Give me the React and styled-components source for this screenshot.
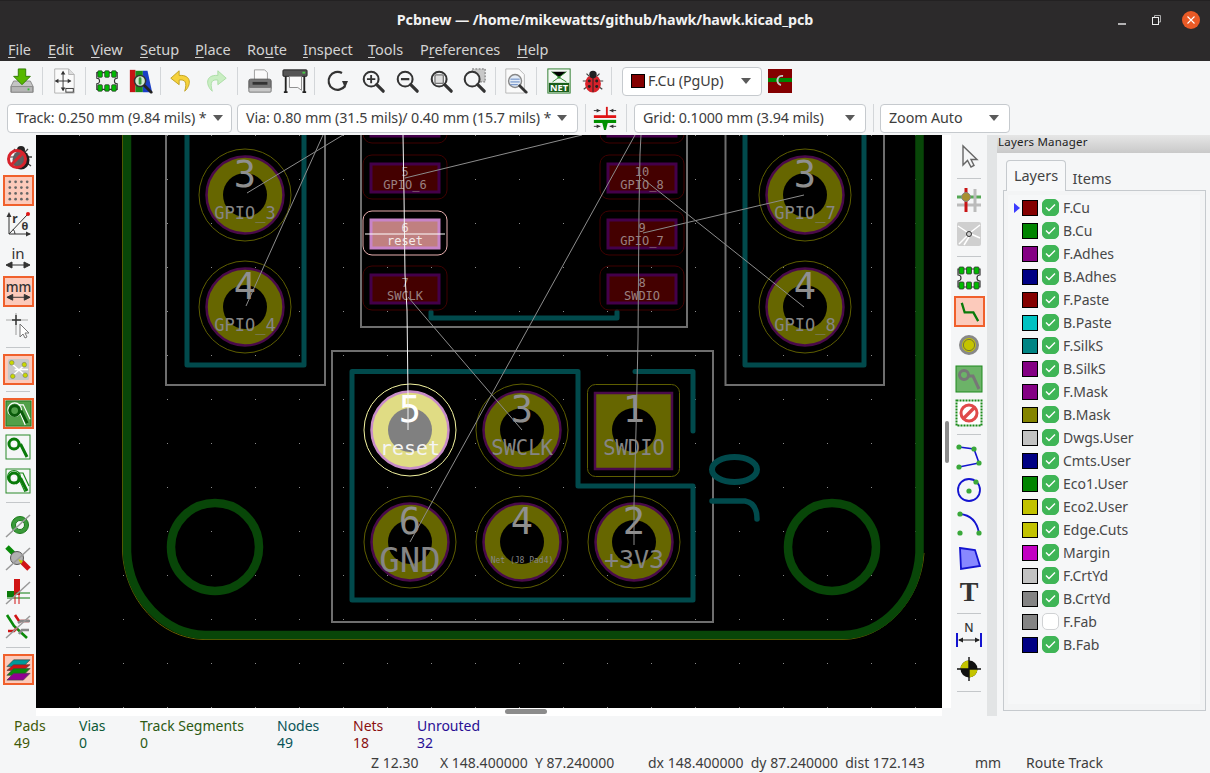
import React from 'react'
import styled, { createGlobalStyle } from 'styled-components'

const UI_FONT = `"Noto Sans", "Open Sans", sans-serif`
const MONO = `"DejaVu Sans Mono", monospace`

const GlobalStyle = createGlobalStyle`
  html, body { margin: 0; padding: 0; background: #f5f6f7; }
  body { font-family: ${UI_FONT}; overflow: hidden; }
`

const Window = styled.div`
  width: 1210px;
  height: 773px;
  display: flex;
  flex-direction: column;
  overflow: hidden;
  background: #f5f6f7;
`

const TitleBar = styled.div`
  height: 38px;
  display: grid;
  grid-template-columns: 1fr auto 1fr;
  align-items: center;
  background: #2c2a2b;
  border-top: 1px solid #232122;
  box-sizing: border-box;
  flex: none;
`
const Title = styled.div`
  grid-column: 2;
  color: #f2f2f2;
  font-size: 14.3px;
  font-weight: 700;
  letter-spacing: -0.1px;
`
const WindowButtons = styled.div`
  grid-column: 3;
  justify-self: end;
  display: flex;
  align-items: center;
  padding-right: 10px;
`
const WindowButton = styled.svg`
  width: ${p => p.$w}px;
  height: 20px;
  display: block;
`

const MenuBar = styled.div`
  height: 23px;
  box-sizing: border-box;
  display: flex;
  align-items: center;
  padding-left: 8px;
  padding-bottom: 2px;
  background: #2c2a2b;
  flex: none;
`
const MenuItem = styled.span`
  width: ${p => p.$w}px;
  color: #d3d3d3;
  font-size: 14.5px;
  letter-spacing: -0.05px;
  white-space: nowrap;
  u { text-underline-offset: 2px; }
`

const Toolbar = styled.div`
  height: ${p => p.$h}px;
  display: flex;
  align-items: center;
  padding-left: ${p => p.$pad}px;
  background: #f5f6f7;
  flex: none;
`
const ToolSlot = styled.div`
  width: ${p => p.$w}px;
  height: 30px;
  display: flex;
  align-items: center;
  justify-content: center;
  flex: none;
`
const ToolSep = styled.div`
  width: ${p => p.$w || 7}px;
  height: 28px;
  flex: none;
  display: flex;
  justify-content: center;
  &::before { content: ''; width: 1px; background: #d3d6d9; }
`
const Combo = styled.div`
  width: ${p => p.$w}px;
  height: 29px;
  box-sizing: border-box;
  margin-left: ${p => p.$ml || 0}px;
  padding: 0 10px 1px 8px;
  display: flex;
  align-items: center;
  justify-content: space-between;
  background: #fff;
  border: 1px solid #c6cace;
  border-radius: 4px;
  color: #3d3d3d;
  font-size: 14.3px;
  letter-spacing: -0.1px;
  white-space: nowrap;
  flex: none;
  &::after {
    content: '';
    border-left: 5px solid transparent;
    border-right: 5px solid transparent;
    border-top: 6px solid #5a5a5a;
    margin-left: 6px;
  }
`
const ComboLabel = styled.span`
  display: flex;
  align-items: center;
  gap: 3px;
`
const LayerSwatchSmall = styled.span`
  width: 12px;
  height: 12px;
  background: #840000;
  border: 1px solid #000;
`
const ActiveLayerBadge = styled.svg`
  width: 24px;
  height: 24px;
  margin-left: 6px;
  flex: none;
`

const Main = styled.div`
  height: 581px;
  display: flex;
  flex: none;
`
const SideBar = styled.div`
  width: ${p => p.$w}px;
  flex: none;
  display: flex;
  flex-direction: column;
  align-items: center;
  padding-top: ${p => p.$top}px;
  box-sizing: border-box;
  background: #f5f6f7;
`
const SideSlot = styled.div`
  width: 31px;
  height: 33.7px;
  flex: none;
  display: flex;
  align-items: center;
  justify-content: center;
  svg {
    display: block;
    width: 28px;
    height: 28px;
    overflow: visible;
    ${p => p.$active && `
      width: 31px;
      height: 31px;
      box-sizing: border-box;
      background: #fccabb;
      border: 2px solid #f0602c;
    `}
  }
`
const SideSep = styled.div`
  width: 24px;
  height: 10.3px;
  flex: none;
  display: flex;
  align-items: center;
  &::before { content: ''; width: 100%; height: 1px; background: #c4c7ca; }
`

const CanvasColumn = styled.div`
  width: 915px;
  flex: none;
  display: flex;
  flex-direction: column;
  background: #f5f6f7;
`
const CanvasRow = styled.div`
  height: 573px;
  display: flex;
  background: #fff;
`
const Board = styled.svg`
  width: 906px;
  height: 573px;
  display: block;
  background: #000;
  flex: none;
`
const VScroll = styled.div`
  width: 9px;
  padding-top: 286px;
  box-sizing: border-box;
  display: flex;
  justify-content: center;
  &::before { content: ''; width: 4px; height: 42px; border-radius: 2px; background: #8c8c8c; }
`
const HScroll = styled.div`
  width: 906px;
  height: 8px;
  padding-left: 469px;
  padding-top: 1px;
  box-sizing: border-box;
  background: #fff;
  &::before { content: ''; display: block; width: 42px; height: 5px; border-radius: 3px; background: #8c8c8c; }
`
const Splitter = styled.div`
  width: 10px;
  flex: none;
  background: #e2e4e5;
`

const LayersPanel = styled.div`
  flex: 1;
  display: flex;
  flex-direction: column;
`
const PanelTitle = styled.div`
  height: 18px;
  padding-left: 1px;
  font-size: 11.5px;
  line-height: 13px;
  color: #222;
  letter-spacing: 0.2px;
  background: linear-gradient(#e6e6e6, #c9c9c9);
  flex: none;
`
const Tabs = styled.div`
  height: 37px;
  display: flex;
  align-items: flex-end;
  padding-left: 9px;
  flex: none;
`
const Tab = styled.div`
  height: ${p => (p.$active ? 31 : 27)}px;
  width: ${p => (p.$active ? 60 : 52)}px;
  box-sizing: border-box;
  display: flex;
  align-items: center;
  justify-content: center;
  font-size: 14.5px;
  color: #444;
  padding-top: ${p => (p.$active ? 0 : 2)}px;
  padding-bottom: ${p => (p.$active ? 2 : 0)}px;
  ${p => p.$active && `
    background: #f7f8f9;
    border: 1px solid #c6cace;
    border-bottom: none;
    border-radius: 4px 4px 0 0;
    margin-bottom: -1px;
    position: relative;
  `}
`
const TabBody = styled.div`
  width: 203px;
  height: 521px;
  margin-left: 6px;
  padding: 4px 5px 6px 4px;
  box-sizing: border-box;
  background: #f3f4f5;
  border: 1px solid #c6cace;
  flex: none;
`
const LayerList = styled.div`
  height: 100%;
  padding-top: 1px;
  box-sizing: border-box;
  background: #f6f7f8;
`
const LayerRow = styled.div`
  height: 23px;
  display: flex;
  align-items: center;
  padding-left: 6px;
`
const ActiveMark = styled.span`
  width: 0;
  height: 0;
  flex: none;
  border-left: 6px solid ${p => (p.$on ? '#3c3cff' : 'transparent')};
  border-top: 5px solid transparent;
  border-bottom: 5px solid transparent;
  margin-right: 2px;
`
const LayerSwatch = styled.span`
  width: 16px;
  height: 16px;
  box-sizing: border-box;
  background: ${p => p.$color};
  border: 1px solid #000;
  flex: none;
`
const LayerCheck = styled.span`
  width: 17px;
  height: 17px;
  margin-left: 4px;
  box-sizing: border-box;
  border-radius: 5px;
  display: flex;
  align-items: center;
  justify-content: center;
  flex: none;
  background: ${p => (p.$checked ? '#3fb556' : '#fff')};
  border: 1px solid ${p => (p.$checked ? '#3fb556' : '#d0d2d4')};
`
const LayerName = styled.span`
  margin-left: 4px;
  font-size: 14px;
  color: #484848;
`

const StatusBar = styled.div`
  height: 57px;
  display: flex;
  flex-direction: column;
  flex: none;
  background: #f5f6f7;
  color: #3d3d3d;
  font-size: 14px;
`
const StatRow = styled.div`
  display: flex;
  padding-left: 14px;
  padding-top: ${p => p.$top}px;
`
const StatCol = styled.div`
  width: ${p => p.$w}px;
  line-height: 17px;
  flex: none;
  white-space: nowrap;
  color: ${p => p.$color};
`
const StatusLine = styled.div`
  display: flex;
  padding-left: 371px;
  line-height: 18px;
  padding-top: 3px;
`
const StatusCell = styled.span`
  width: ${p => p.$w}px;
  flex: none;
  white-space: pre;
`

const PadNumber = styled.text`
  font-family: ${MONO};
  text-anchor: middle;
  fill: ${p => p.$fill};
`

/* toolbar icon drawing */
const TOP = 26
const Ico = ({ s = 28, children }) => (
  <svg width={s} height={s} viewBox="0 0 28 28">{children}</svg>
)
const Mag = ({ children, stroke = '#333' }) => (
  <>
    <circle cx="12" cy="12" r="8" fill="#f5f6f7" stroke={stroke} strokeWidth="2.2" />
    <path d="M18 18l7 7" stroke={stroke} strokeWidth="3.4" strokeLinecap="round" />
    {children}
  </>
)
const Tiny = ({ x, y, size = 14, fill = '#333', weight = 400, family = UI_FONT, children }) => (
  <text x={x} y={y} fontSize={size} fill={fill} fontWeight={weight} fontFamily={family} textAnchor="middle">{children}</text>
)
const DoubleArrow = ({ y = 21 }) => (
  <g stroke="#333" strokeWidth="1" fill="#333">
    <path d={`M3 ${y}H25`} />
    <path d={`M2 ${y}l6-3v6z M26 ${y}l-6-3v6z`} />
  </g>
)
const ChipPads = () => (
  <>
    <path d="M3 5H25V11a3 3 0 0 0 0 6V23H3V17a3 3 0 0 0 0-6Z" fill="#eee" stroke="#333" strokeWidth="1.2" />
    {[4, 11.5, 19].map(x => (
      <g key={x} fill="#0b0" stroke="#333" strokeWidth="0.8">
        <rect x={x} y="3" width="5" height="7" rx="1" />
        <rect x={x} y="18" width="5" height="7" rx="1" />
      </g>
    ))}
  </>
)
const Diag = () => <path d="M2 26L26 4" stroke="#999" strokeWidth="1.5" />

const IconSave = () => (
  <Ico s={TOP}>
    <path d="M5 14H23L26 20V26H2V20Z" fill="#c4c4c4" stroke="#8a8a8a" />
    <rect x="2.5" y="20" width="23" height="6" fill="#b5b5b5" stroke="#8a8a8a" />
    <rect x="20" y="22" width="2" height="2" fill="#3b3" />
    <path d="M10 1H18V9H23L14 18L5 9H10Z" fill="#58b800" stroke="#2f7a00" />
  </Ico>
)
const IconPage = () => (
  <Ico s={TOP}>
    <path d="M4 1H19L25 7V27H4Z" fill="#fafafa" stroke="#b0b0b0" />
    <path d="M19 1V7H25" fill="#ddd" stroke="#b0b0b0" />
    <path d="M13 4V24M5 14H21" stroke="#333" />
    <path d="M13 3l-2.5 4h5zM13 25l-2.5-4h5zM4 14l4-2.5v5zM22 14l-4-2.5v5z" fill="#333" />
    <rect x="16" y="22" width="8" height="4" fill="none" stroke="#333" />
  </Ico>
)
const IconFootprint = () => <Ico s={TOP}><ChipPads /></Ico>
const IconInspector = () => (
  <Ico s={TOP}>
    <rect x="2" y="2" width="6" height="24" fill="#c71414" />
    <rect x="8" y="3" width="8" height="23" fill="#1a8a1a" />
    <path d="M16 3H21L26 26H16Z" fill="#1a3ec7" />
    <circle cx="13" cy="14" r="6" fill="#cfe8cf" stroke="#333" strokeWidth="1.6" />
    <rect x="11.5" y="10" width="3" height="8" rx="1.5" fill="#3a9a3a" />
    <path d="M18 19l7 7" stroke="#222" strokeWidth="3" strokeLinecap="round" />
  </Ico>
)
const Arrow = ({ fill, stroke, flip }) => (
  <Ico s={TOP}>
    <path
      d="M12 3L3 11L12 18V13C18 12 21 15 18 25C25 19 26 7 12 8Z"
      fill={fill}
      stroke={stroke}
      transform={flip ? 'translate(28 0) scale(-1 1)' : undefined}
    />
  </Ico>
)
const IconUndo = () => <Arrow fill="#f6d23c" stroke="#bfa020" />
const IconRedo = () => <Arrow flip fill="#c9eec2" stroke="#aadca4" />
const IconPrint = () => (
  <Ico s={TOP}>
    <path d="M8 2H19L22 5V13H8Z" fill="#fafafa" stroke="#999" />
    <path d="M4 12H24a2 2 0 0 1 2 2V22H2V14a2 2 0 0 1 2-2Z" fill="#777" stroke="#555" />
    <rect x="2" y="21" width="24" height="5" rx="1" fill="#c8c8c8" stroke="#777" />
    <rect x="6" y="15" width="16" height="3" fill="#333" />
  </Ico>
)
const IconPlot = () => (
  <Ico s={TOP}>
    <rect x="1" y="2" width="26" height="7" rx="1" fill="#555" stroke="#222" />
    <rect x="22" y="4" width="3" height="2" fill="#4c4" />
    <path d="M8 9H21V24L17 21L8 21Z" fill="#fafafa" stroke="#888" />
    <path d="M4 9V26M24 9V26M2 26H6M22 26H26" stroke="#222" strokeWidth="2" />
  </Ico>
)
const IconRedraw = () => (
  <Ico>
    <path d="M21 19A9 9 0 1 1 18 6" fill="none" stroke="#333" strokeWidth="2.2" />
    <path d="M24 14H18L21 21Z" fill="#333" />
  </Ico>
)
const IconZoomIn = () => <Ico s={TOP}><Mag><path d="M12 7.5V16.5M7.5 12H16.5" stroke="#333" strokeWidth="2" /></Mag></Ico>
const IconZoomOut = () => <Ico s={TOP}><Mag><path d="M7.5 12H16.5" stroke="#333" strokeWidth="2.4" /></Mag></Ico>
const IconZoomFit = () => <Ico s={TOP}><Mag><rect x="7.5" y="7.5" width="9" height="9" rx="1" fill="#ddd" stroke="#777" strokeWidth="1.4" /></Mag></Ico>
const IconZoomSel = () => (
  <Ico s={TOP}>
    <rect x="12" y="1" width="14" height="14" fill="#c8c8c8" stroke="#666" strokeDasharray="2 1.5" />
    <Mag />
  </Ico>
)
const IconFind = () => (
  <Ico s={TOP}>
    <path d="M3 1H17L23 7V27H3Z" fill="#fafafa" stroke="#b5b5b5" />
    <circle cx="13" cy="14" r="7" fill="#e4ecf6" stroke="#888" strokeWidth="1.5" />
    <path d="M8 12H18M8 15H18M8 18H16" stroke="#5a80c0" />
    <path d="M18 19l7 7" stroke="#333" strokeWidth="3" strokeLinecap="round" />
  </Ico>
)
const IconNet = () => (
  <Ico s={TOP}>
    <rect x="2" y="1" width="24" height="26" fill="#f2f8f2" stroke="#2a7a2a" />
    <path d="M6 4L14 10L22 4M14 10L7 15M14 10L22 15" stroke="#2a8a2a" />
    <circle cx="14" cy="10" r="1.5" fill="#2a8a2a" />
    <rect x="3" y="16" width="22" height="10" fill="#1a5e1a" />
    <Tiny x={14} y={25} size={10} fill="#fff" weight={700}>NET</Tiny>
  </Ico>
)
const Bug = ({ body = '#d8222a' }) => (
  <>
    <path d="M7 6L10 9M21 6L18 9M3 14H7M25 14H21M4 23L8 20M24 23L20 20" stroke="#444" strokeWidth="1.3" />
    <ellipse cx="14" cy="17" rx="8.5" ry="9.5" fill={body} />
    <circle cx="14" cy="7" r="4" fill="#222" />
    <g fill="#222">
      <circle cx="10" cy="14" r="1.6" /><circle cx="18" cy="14" r="1.6" />
      <circle cx="10" cy="20" r="1.6" /><circle cx="18" cy="20" r="1.6" />
    </g>
    <path d="M14 8V26" stroke="#222" />
  </>
)
const IconBug = () => <Ico s={TOP}><Bug /></Ico>
const IconRoutes = () => (
  <Ico s={TOP}>
    <path d="M2 6H9M26 6H19M2 23H9M26 23H19" stroke="#333" />
    <path d="M9 6l-4-2v4zM19 6l4-2v4zM9 23l-4-2v4zM19 23l4-2v4z" fill="#333" />
    <path d="M16 2V12" stroke="#d81818" strokeWidth="2" />
    <rect x="2" y="11" width="24" height="3" fill="#e01414" />
    <rect x="2" y="16" width="24" height="3.4" fill="#009000" />
    <path d="M11 19H17L15 27H13Z" fill="#009000" />
  </Ico>
)

/* left toolbar */
const IconNoDrc = () => (
  <Ico>
    <g transform="translate(3 0)"><Bug body="#1c1c1c" /></g>
    <circle cx="13" cy="16" r="8.5" fill="#f5f6f7" fillOpacity=".3" stroke="#d8232c" strokeWidth="3" />
    <path d="M7 22L19 10" stroke="#d8232c" strokeWidth="3" />
  </Ico>
)
const IconGridDots = () => (
  <Ico>
    {[5, 11, 17, 23].map(y => [5, 11, 17, 23].map(x => (
      <circle key={`${x}-${y}`} cx={x} cy={y} r="1.4" fill="#666" />
    )))}
  </Ico>
)
const IconPolar = () => (
  <Ico>
    <path d="M5 4V24H26" fill="none" stroke="#333" />
    <path d="M5 2l-2.5 5h5zM27 24l-5-2.5v5z" fill="#333" />
    <path d="M5 24L23 5" stroke="#333" />
    <path d="M11 24a8 8 0 0 0-2-5" fill="none" stroke="#333" />
    <circle cx="24" cy="4" r="2" fill="#e01414" />
    <Tiny x={11} y={13} size={12} weight={700}>r</Tiny>
    <Tiny x={21} y={20} size={11} weight={700}>θ</Tiny>
  </Ico>
)
const IconIn = () => (
  <Ico>
    <Tiny x={14} y={15} size={15}>in</Tiny>
    <DoubleArrow y={21} />
  </Ico>
)
const IconMm = () => (
  <Ico>
    <Tiny x={14} y={14} size={14} weight={500}>mm</Tiny>
    <DoubleArrow y={20} />
  </Ico>
)
const IconCursorCross = () => (
  <Ico>
    <path d="M2 9H24M12 2V24" stroke="#aaa" strokeWidth="1.2" />
    <path d="M8 9H17M12 4V14" stroke="#333" strokeWidth="1.4" />
    <path d="M16 13V26L19 23L21 27L23 26L21 22H25Z" fill="#fff" stroke="#777" />
  </Ico>
)
const IconRatsnest = () => (
  <Ico>
    <rect x="3" y="3" width="22" height="22" rx="2" fill="#c8c8c8" />
    <path d="M7 8L22 21M7 21L22 8M10 14H24" stroke="#fff" strokeWidth="1.5" />
    {[[7, 7], [20, 9], [8, 21], [21, 20]].map(([x, y]) => (
      <circle key={x + y} cx={x} cy={y} r="2.4" fill="#c8d800" stroke="#666" strokeWidth=".5" />
    ))}
  </Ico>
)
const PadShape = ({ stroke = '#0a7a0a', hole = '#fff' }) => (
  <>
    <circle cx="10" cy="11" r="5" fill="none" stroke={stroke} strokeWidth="3" />
    <path d="M14 12H17L23 24" fill="none" stroke={stroke} strokeWidth="3" />
    <circle cx="10" cy="11" r="1.5" fill={hole} />
  </>
)
const IconPadFill = () => (
  <Ico>
    <rect x="1" y="1" width="26" height="26" fill="#52a04a" stroke="#1f7a1f" />
    <circle cx="10" cy="10" r="7" fill="none" stroke="#fff" strokeWidth="1.2" />
    <path d="M14 5H19L26 20M12 17L16 14L21 26" fill="none" stroke="#fff" strokeWidth="1.2" />
    <PadShape stroke="#0a5a0a" hole="#52a04a" />
  </Ico>
)
const IconPadLine = () => (
  <Ico>
    <rect x="2" y="2" width="24" height="24" fill="none" stroke="#2a8a2a" />
    <PadShape />
  </Ico>
)
const IconPadDouble = () => (
  <Ico>
    <rect x="2" y="2" width="24" height="24" fill="none" stroke="#2a8a2a" />
    <circle cx="10" cy="10" r="6.5" fill="none" stroke="#1a8a1a" strokeWidth="1.2" />
    <path d="M14 6H19L25 19M12 17L16 14L21 25" fill="none" stroke="#1a8a1a" strokeWidth="1.2" />
    <PadShape />
  </Ico>
)
const IconViaOff = () => (
  <Ico>
    <circle cx="16" cy="14" r="8.5" fill="#3b9a3b" stroke="#1a7a1a" />
    <circle cx="16" cy="14" r="4.5" fill="#f5f6f7" stroke="#1a7a1a" />
    <Diag />
  </Ico>
)
const IconViaTrack = () => (
  <Ico>
    <path d="M3 3L13 13" stroke="#0a8a0a" strokeWidth="5" />
    <path d="M15 15L25 25" stroke="#d01414" strokeWidth="5" />
    <circle cx="13" cy="14" r="6.5" fill="#b0b0b0" stroke="#555" />
    <path d="M14 15l5 2l-2 3z" fill="#c8c800" />
    <Diag />
  </Ico>
)
const IconZoneOff = () => (
  <Ico>
    <rect x="10" y="1" width="6" height="16" fill="#d01414" />
    <rect x="3" y="13" width="7" height="6" fill="#0a7a0a" />
    <path d="M3 15H26M3 20H26" stroke="#0a7a0a" />
    <path d="M11 12V26M15 12V26" stroke="#d01414" />
    <Diag />
  </Ico>
)
const IconTracksOff = () => (
  <Ico>
    <path d="M11 3L15 9H25" fill="none" stroke="#d01414" strokeWidth="2.6" />
    <path d="M3 3L10 14L23 26" fill="none" stroke="#0a8a0a" strokeWidth="2.6" />
    <path d="M4 19H10L13 16" fill="none" stroke="#d01414" strokeWidth="2.6" />
    <path d="M15 22L18 18H25" fill="none" stroke="#888" strokeWidth="2.6" />
    <path d="M14 11L17 9H26" fill="none" stroke="#888" strokeWidth="2.6" />
    <Diag />
  </Ico>
)
const IconLayers = () => (
  <Ico>
    <path d="M9 4H26L19 11H2Z" fill="#009a9a" stroke="#444" strokeWidth=".7" />
    <path d="M9 9H26L19 15H2Z" fill="#d01414" stroke="#444" strokeWidth=".7" />
    <path d="M9 13H26L19 20H2Z" fill="#0a8a0a" stroke="#444" strokeWidth=".7" />
    <path d="M9 18H26L19 25H2Z" fill="#900090" stroke="#444" strokeWidth=".7" />
  </Ico>
)

/* right toolbar */
const IconCursor = () => (
  <Ico><path d="M8 4V23L12.5 18.5L16 25L19 23.5L16 17.5H22Z" fill="#f5f6f7" stroke="#666" strokeWidth="1.4" /></Ico>
)
const IconHighlight = () => (
  <Ico>
    <path d="M2 11H26" stroke="#55a855" strokeWidth="3" />
    <path d="M2 19H26M20 3V26" stroke="#bbb" strokeWidth="3" />
    <path d="M11 2V26" stroke="#c81414" strokeWidth="3" />
    <circle cx="11" cy="11" r="4.4" fill="#a89030" stroke="#888" />
  </Ico>
)
const IconLocalRats = () => (
  <Ico>
    <rect x="2" y="2" width="24" height="24" rx="2" fill="#cfcfcf" />
    <path d="M4 24L12 16M16 12L25 5M3 6L12 12M16 14L25 18M14 17L9 25" stroke="#fff" strokeWidth="1.5" />
    <circle cx="14" cy="14" r="2.5" fill="#cfcfcf" stroke="#333" />
  </Ico>
)
const IconChip = () => <Ico><ChipPads /></Ico>
const IconTrack = () => (
  <Ico><path d="M6 5L9 15H18L23 24" fill="none" stroke="#0a7a0a" strokeWidth="2.4" /></Ico>
)
const IconVia = () => (
  <Ico>
    <circle cx="14" cy="14" r="8.5" fill="#c4c400" stroke="#888" strokeWidth="3" />
    <circle cx="14" cy="14" r="5.6" fill="#c4c400" stroke="#555" strokeWidth=".7" />
  </Ico>
)
const IconZone = () => (
  <Ico>
    <rect x="1" y="1" width="26" height="26" fill="#6cb368" stroke="#1f8a1f" />
    <circle cx="9" cy="10" r="4.5" fill="none" stroke="#777" strokeWidth="3" />
    <path d="M13 11H18L24 24" fill="none" stroke="#777" strokeWidth="3" />
  </Ico>
)
const IconKeepout = () => (
  <Ico>
    <rect x="1.5" y="1.5" width="25" height="25" fill="#fff" stroke="#1a8a1a" strokeWidth="2" strokeDasharray="2 1" />
    <circle cx="14" cy="14" r="8" fill="#fff" stroke="#e04a4a" strokeWidth="3" />
    <path d="M8 20L20 8" stroke="#e04a4a" strokeWidth="3.4" />
  </Ico>
)
const Node = ({ x, y, r = 2.6 }) => <circle cx={x} cy={y} r={r} fill="#3aa83a" />
const IconPolyline = () => (
  <Ico>
    <path d="M4 4L19 6L24 20L4 24" fill="none" stroke="#1414d0" strokeWidth="1.6" />
    <Node x={4} y={4} /><Node x={19} y={6} /><Node x={24} y={20} /><Node x={4} y={24} />
  </Ico>
)
const IconCircle = () => (
  <Ico>
    <circle cx="14" cy="14" r="11" fill="none" stroke="#1414d0" strokeWidth="1.8" />
    <Node x={14} y={15} /><Node x={21} y={6} />
  </Ico>
)
const IconArc = () => (
  <Ico>
    <path d="M5 4C16 5 22 12 24 23" fill="none" stroke="#1414d0" strokeWidth="1.8" />
    <Node x={5} y={4} /><Node x={24} y={23} /><Node x={5} y={23} />
  </Ico>
)
const IconPoly = () => (
  <Ico><path d="M5 4L20 6L25 22L6 25Z" fill="#8888ff" stroke="#1414d0" strokeWidth="1.8" /></Ico>
)
const IconText = () => (
  <Ico><Tiny x={14} y={24} size={28} weight={700} family={`"Liberation Serif", serif`}>T</Tiny></Ico>
)
const IconDimension = () => (
  <Ico>
    <Tiny x={14} y={11} size={12} weight={500}>N</Tiny>
    <path d="M2 12V26M26 12V26" stroke="#1414d0" strokeWidth="2" />
    <path d="M4 19H24" stroke="#222" />
    <path d="M3 19l5-2.5v5zM25 19l-5-2.5v5z" fill="#222" />
  </Ico>
)
const IconTarget = () => (
  <Ico>
    <circle cx="14" cy="14" r="8.5" fill="#111" />
    <path d="M14 5.5A8.5 8.5 0 0 0 5.5 14H14ZM14 22.5A8.5 8.5 0 0 0 22.5 14H14Z" fill="#c4c400" />
    <path d="M14 2V26M2 14H26" stroke="#111" strokeWidth="1.4" />
  </Ico>
)

const SEP = 'sep'
const leftTools = [
  [IconNoDrc], [IconGridDots, true], [IconPolar], [IconIn], [IconMm, true], [IconCursorCross],
  SEP, [IconRatsnest, true], SEP, [IconPadFill, true], [IconPadLine], [IconPadDouble],
  SEP, [IconViaOff], [IconViaTrack], [IconZoneOff], [IconTracksOff], SEP, [IconLayers, true],
]
const rightTools = [
  [IconCursor], SEP, [IconHighlight], [IconLocalRats], SEP,
  [IconChip], [IconTrack, true], [IconVia], [IconZone], [IconKeepout], SEP,
  [IconPolyline], [IconCircle], [IconArc], [IconPoly], [IconText], SEP, [IconDimension], [IconTarget], SEP,
]

const topTools = [
  [IconSave, 34], SEP, [IconPage, 36], SEP, [IconFootprint, 36], [IconInspector, 32], SEP,
  [IconUndo, 34], [IconRedo, 36], SEP,
  [IconPrint, 38], [IconPlot, 32], SEP, [IconRedraw, 40], [IconZoomIn, 30], [IconZoomOut, 38],
  [IconZoomFit, 30], [IconZoomSel, 36], SEP, [IconFind, 34], SEP, [IconNet, 38], [IconBug, 30], SEP,
]

const layers = [
  ['F.Cu', '#840000'], ['B.Cu', '#008400'], ['F.Adhes', '#840084'], ['B.Adhes', '#000084'],
  ['F.Paste', '#840000'], ['B.Paste', '#00c2c2'], ['F.SilkS', '#008484'], ['B.SilkS', '#840084'],
  ['F.Mask', '#840084'], ['B.Mask', '#848400'], ['Dwgs.User', '#c2c2c2'], ['Cmts.User', '#000084'],
  ['Eco1.User', '#008400'], ['Eco2.User', '#c2c200'], ['Edge.Cuts', '#c2c200'], ['Margin', '#c200c2'],
  ['F.CrtYd', '#c2c2c2'], ['B.CrtYd', '#848484'], ['F.Fab', '#848484', true], ['B.Fab', '#000084'],
]

// [before mnemonic, mnemonic letter, rest, column width]
const menus = [
  ['', 'F', 'ile', 40], ['', 'E', 'dit', 43], ['', 'V', 'iew', 49], ['', 'S', 'etup', 55], ['', 'P', 'lace', 52],
  ['Ro', 'u', 'te', 56], ['', 'I', 'nspect', 65], ['', 'T', 'ools', 52], ['P', 'r', 'eferences', 97], ['', 'H', 'elp', 40],
]

const stats = [
  ['Pads', '49', 65, '#3f5a08'], ['Vias', '0', 61, '#0c5a38'], ['Track Segments', '0', 137, '#2c5a14'],
  ['Nodes', '49', 76, '#0a5458'], ['Nets', '18', 64, '#8a1010'], ['Unrouted', '32', 100, '#280e94'],
]

/* pcb parts */
const TEAL = '#014a4c'
const COPPER = '#084608'
const OLIVE = '#666600'

const RoundPad = ({ x, y, num, label, size = 17, base = 24, hi }) => (
  <g>
    <circle cx={x} cy={y} r="46" fill="none" stroke={hi ? '#f4f4a0' : '#5e5e00'} />
    <circle cx={x} cy={y} r="38.5" fill={hi ? '#e0dc84' : OLIVE} stroke={hi ? '#c88cc8' : '#4a0a4a'} strokeWidth="2.5" />
    <circle cx={x} cy={y} r="22" fill={hi ? '#808080' : '#000'} />
    <PadNumber x={x} y={y - 8} fontSize="37" $fill={hi ? '#fff' : '#8f8f8f'}>{num}</PadNumber>
    <PadNumber x={x} y={y + base} fontSize={size} $fill={hi ? '#f4f4f4' : '#858585'}>{label}</PadNumber>
  </g>
)

const SmdPad = ({ x, y, num, label, hi }) => (
  <g>
    <rect x={x - 7} y={y - 8} width="84" height="44" rx="9" fill="none" stroke={hi ? '#eab0b0' : '#400000'} />
    <rect x={x + 1} y={y + 1} width="68" height="28" fill={hi ? '#c08080' : '#440000'} stroke={hi ? '#c884c8' : '#44004a'} strokeWidth="3" />
    {hi && <path d={`M${x - 5} ${y + 15}H${x + 75}`} stroke="#fff" />}
    <PadNumber x={x + 35} y={y + 13} fontSize="12" $fill={hi ? '#f0e0e0' : '#9a8080'}>{num}</PadNumber>
    <PadNumber x={x + 35} y={y + 26} fontSize="12" $fill={hi ? '#f4eaea' : '#9a8080'}>{label}</PadNumber>
  </g>
)

const ratsnest = [
  ['M247 193L343 135'], ['M246 306L323 135'], ['M405 178L582 135'],
  ['M635 135L410 542'], ['M408 297L522 430'], ['M642 178L804 307'], ['M643 233L804 195'],
  ['M641 135L640 154L639 210L638 340L636 430L634 505L634 545'],
  ['M403 135L404 195L405 275L407 310L408 395L408 430', true],
]

const PcbCanvas = () => (
  <Board viewBox="36 135 906 573">
    <defs>
      <pattern id="grid" x="35" y="3" width="44" height="44" patternUnits="userSpaceOnUse">
        <rect width="1" height="1" fill="#8a8a8a" />
      </pattern>
    </defs>
    <rect x="36" y="135" width="906" height="573" fill="url(#grid)" />

    <path d="M122.5 135V552C125 600 160 638 203 639.5H843C885 639 921 600 924 553" fill="none" stroke="#6a6000" />
    <path d="M127 135V552C129 598 165 634 205 635H843C884 634 917 598 919.5 553V135" fill="none" stroke={COPPER} strokeWidth="8.5" />
    <circle cx="215" cy="547" r="44" fill="none" stroke={COPPER} strokeWidth="8.5" />
    <circle cx="832" cy="547" r="44" fill="none" stroke={COPPER} strokeWidth="8.5" />

    <g fill="none" stroke="#6e6e6e" strokeWidth="2">
      <path d="M166 130V385H325V130" />
      <path d="M725.5 130V385H884V130" />
      <path d="M361 130V327H687V130" />
      <rect x="332" y="351" width="381" height="271" />
    </g>

    <g fill="none" stroke={TEAL} strokeWidth="5" strokeLinecap="round" strokeLinejoin="round">
      <path d="M187 130V365H304V130" />
      <path d="M745 130V365H864V130" />
      <path d="M352 371.5H578V486H693V600H352Z" />
      <path d="M635 371.5H693V431" />
      <path d="M431 312V318H617V312" />
      <ellipse cx="734.5" cy="469.5" rx="22.5" ry="12.5" strokeWidth="6" />
      <path d="M712 501H745Q757 503 757 519" strokeWidth="5.5" />
    </g>

    <RoundPad x={245} y={195} num="3" label="GPIO_3" />
    <RoundPad x={245} y={307} num="4" label="GPIO_4" />
    <RoundPad x={805} y={195} num="3" label="GPIO_7" />
    <RoundPad x={805} y={307} num="4" label="GPIO_8" />

    <SmdPad x={370} y={107} num="" label="" />
    <SmdPad x={607} y={107} num="" label="" />
    <SmdPad x={370} y={163} num="5" label="GPIO_6" />
    <SmdPad x={370} y={219} num="6" label="reset" hi />
    <SmdPad x={370} y={274} num="7" label="SWCLK" />
    <SmdPad x={607} y={163} num="10" label="GPIO_8" />
    <SmdPad x={607} y={219} num="9" label="GPIO_7" />
    <SmdPad x={607} y={274} num="8" label="SWDIO" />

    <RoundPad x={410} y={430} num="5" label="reset" size={20} base={25} hi />
    <RoundPad x={522} y={430} num="3" label="SWCLK" size={20.5} base={25} />
    <rect x="587.5" y="384.5" width="92" height="92" rx="8" fill="none" stroke="#5e5e00" />
    <rect x="595" y="393" width="77" height="76" fill={OLIVE} stroke="#4a0a4a" strokeWidth="2.5" />
    <circle cx="634" cy="430" r="22" fill="#000" />
    <PadNumber x={634} y={422} fontSize="37" $fill="#8f8f8f">1</PadNumber>
    <PadNumber x={634} y={455} fontSize="20.5" $fill="#858585">SWDIO</PadNumber>
    <RoundPad x={410} y={542} num="6" label="GND" size={34} base={30} />
    <RoundPad x={522} y={542} num="4" label="Net (J8 Pad4)" size={8} base={21} />
    <RoundPad x={634} y={542} num="2" label="+3V3" size={25} base={26} />

    <g fill="none">
      {ratsnest.map(([d, hi]) => (
        <path key={d} d={d} stroke={hi ? '#f4f4f4' : '#8c8c8c'} strokeWidth="1" />
      ))}
    </g>
  </Board>
)

const ToolColumn = ({ items }) => items.map((item, i) => {
  if (item === SEP) return <SideSep key={i} />
  const [Icon, active] = item
  return <SideSlot key={i} $active={active}><Icon /></SideSlot>
})

const App = () => (
  <Window>
    <GlobalStyle />
    <TitleBar>
      <Title>Pcbnew — /home/mikewatts/github/hawk/hawk.kicad_pcb</Title>
      <WindowButtons>
        <WindowButton $w={22} viewBox="0 0 22 20"><path d="M2 14H10" stroke="#eee" strokeWidth="1.4" /></WindowButton>
        <WindowButton $w={44} viewBox="0 0 44 20">
          <rect x="14.5" y="7.5" width="6" height="7" fill="none" stroke="#eee" />
          <path d="M16.5 7V5.5H22.5V12H21" fill="none" stroke="#aaa" />
        </WindowButton>
        <WindowButton $w={18} viewBox="0 0 18 20">
          <circle cx="9" cy="10" r="9" fill="#e95a26" />
          <path d="M5.5 6.5L12.5 13.5M12.5 6.5L5.5 13.5" stroke="#fff" strokeWidth="1.1" />
        </WindowButton>
      </WindowButtons>
    </TitleBar>
    <MenuBar>
      {menus.map(([pre, key, rest, w]) => (
        <MenuItem key={pre + key + rest} $w={w}>{pre}<u>{key}</u>{rest}</MenuItem>
      ))}
    </MenuBar>

    <Toolbar $h={40} $pad={5}>
      {topTools.map((item, i) => {
        if (item === SEP) return <ToolSep key={i} />
        const [Icon, w] = item
        return <ToolSlot key={i} $w={w}><Icon /></ToolSlot>
      })}
      <Combo $w={140} $ml={7}>
        <ComboLabel><LayerSwatchSmall />F.Cu (PgUp)</ComboLabel>
      </Combo>
      <ActiveLayerBadge viewBox="0 0 24 24">
        <rect width="24" height="24" fill="#840000" />
        <rect y="9" width="24" height="4" fill="#008400" />
        <path d="M15 7A4 4 0 1 0 13 16" fill="none" stroke="#c8c8c8" strokeWidth="2" />
      </ActiveLayerBadge>
    </Toolbar>
    <Toolbar $h={34} $pad={7}>
      <Combo $w={225}>Track: 0.250 mm (9.84 mils) *</Combo>
      <Combo $w={341} $ml={5}>Via: 0.80 mm (31.5 mils)/ 0.40 mm (15.7 mils) *</Combo>
      <ToolSep $w={14} />
      <ToolSlot $w={26}><IconRoutes /></ToolSlot>
      <ToolSep $w={16} />
      <Combo $w={232}>Grid: 0.1000 mm (3.94 mils)</Combo>
      <ToolSep $w={14} />
      <Combo $w={130}>Zoom Auto</Combo>
    </Toolbar>

    <Main>
      <SideBar $w={36} $top={5}><ToolColumn items={leftTools} /></SideBar>
      <CanvasColumn>
        <CanvasRow>
          <PcbCanvas />
          <VScroll />
        </CanvasRow>
        <HScroll />
      </CanvasColumn>
      <SideBar $w={36} $top={4.5}><ToolColumn items={rightTools} /></SideBar>
      <Splitter />
      <LayersPanel>
        <PanelTitle>Layers Manager</PanelTitle>
        <Tabs>
          <Tab $active>Layers</Tab>
          <Tab>Items</Tab>
        </Tabs>
        <TabBody>
          <LayerList>
            {layers.map(([name, color, off], i) => (
              <LayerRow key={name}>
                <ActiveMark $on={i === 0} />
                <LayerSwatch $color={color} />
                <LayerCheck $checked={!off}>
                  {!off && (
                    <svg width="11" height="9" viewBox="0 0 11 9">
                      <path d="M1 4.5L4 7.5L10 1.5" fill="none" stroke="#fff" strokeWidth="1.4" />
                    </svg>
                  )}
                </LayerCheck>
                <LayerName>{name}</LayerName>
              </LayerRow>
            ))}
          </LayerList>
        </TabBody>
      </LayersPanel>
    </Main>

    <StatusBar>
      <StatRow $top={1}>
        {stats.map(([label, , w, color]) => <StatCol key={label} $w={w} $color={color}>{label}</StatCol>)}
      </StatRow>
      <StatRow $top={0}>
        {stats.map(([label, value, w, color]) => <StatCol key={label} $w={w} $color={color}>{value}</StatCol>)}
      </StatRow>
      <StatusLine>
        <StatusCell $w={69}>Z 12.30</StatusCell>
        <StatusCell $w={208}>X 148.400000  Y 87.240000</StatusCell>
        <StatusCell $w={327}>dx 148.400000  dy 87.240000  dist 172.143</StatusCell>
        <StatusCell $w={51}>mm</StatusCell>
        <StatusCell $w={100}>Route Track</StatusCell>
      </StatusLine>
    </StatusBar>
  </Window>
)

export default App
